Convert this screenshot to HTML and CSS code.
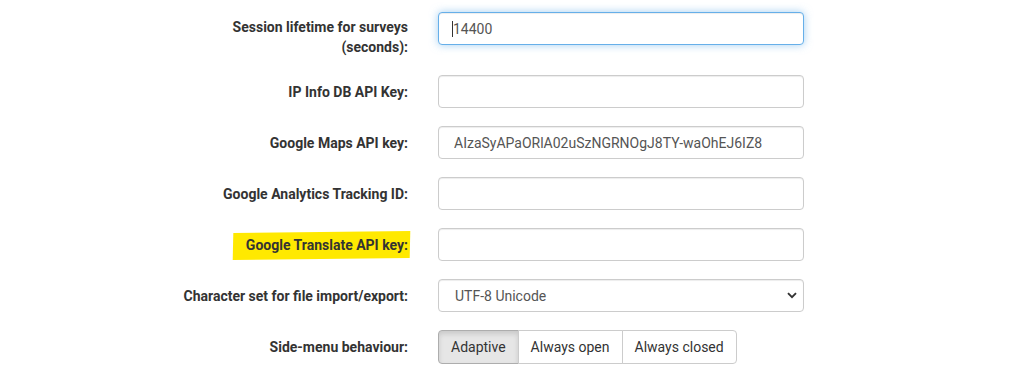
FILE: index.html
```html
<!DOCTYPE html>
<html lang="en">
<head>
    <meta charset="UTF-8">
    <meta name="viewport" content="width=device-width, initial-scale=1.0">
    <title>Global settings</title>
    <link rel="stylesheet" href="styles.css">
</head>
<body>
    <form class="settings-form">
        <div class="form-row">
            <label class="form-label" for="sessionLifetime">Session lifetime for surveys<br>(seconds):</label>
            <div class="form-field">
                <input type="text" id="sessionLifetime" class="form-input is-focused" value="14400">
                <span class="caret"></span>
            </div>
        </div>

        <div class="form-row">
            <label class="form-label" for="ipInfoKey">IP Info DB API Key:</label>
            <div class="form-field">
                <input type="text" id="ipInfoKey" class="form-input">
            </div>
        </div>

        <div class="form-row">
            <label class="form-label" for="mapsKey">Google Maps API key:</label>
            <div class="form-field">
                <input type="text" id="mapsKey" class="form-input" value="AIzaSyAPaORlA02uSzNGRNOgJ8TY-waOhEJ6IZ8">
            </div>
        </div>

        <div class="form-row">
            <label class="form-label" for="analyticsId">Google Analytics Tracking ID:</label>
            <div class="form-field">
                <input type="text" id="analyticsId" class="form-input">
            </div>
        </div>

        <div class="form-row">
            <label class="form-label" for="translateKey"><span class="marker">Google Translate API key:</span></label>
            <div class="form-field">
                <input type="text" id="translateKey" class="form-input">
            </div>
        </div>

        <div class="form-row">
            <label class="form-label" for="charset">Character set for file import/export:</label>
            <div class="form-field select-wrap">
                <select id="charset" class="form-input form-select">
                    <option>UTF-8 Unicode</option>
                    <option>ISO-8859-1 West European</option>
                </select>
                <svg class="select-arrow" width="10" height="7" viewBox="0 0 10 7">
                    <path d="M1 1.2 L5 5.2 L9 1.2" fill="none" stroke="#333" stroke-width="1.9"/>
                </svg>
            </div>
        </div>

        <div class="form-row">
            <label class="form-label">Side-menu behaviour:</label>
            <div class="form-field">
                <div class="btn-group">
                    <button type="button" class="btn active">Adaptive</button>
                    <button type="button" class="btn">Always open</button>
                    <button type="button" class="btn">Always closed</button>
                </div>
            </div>
        </div>
    </form>
</body>
</html>
```

FILE: styles.css
```css
* {
    box-sizing: border-box;
    margin: 0;
    padding: 0;
}

body {
    font-family: Roboto, "Helvetica Neue", Arial, sans-serif;
    font-size: 14px;
    line-height: 20px;
    color: #333;
    background: #fff;
}

.settings-form {
    padding-top: 12px;
    display: flex;
    flex-direction: column;
    gap: 18px;
}

.form-row {
    display: grid;
    grid-template-columns: 408px 366px;
    column-gap: 30px;
    align-items: center;
}

.form-row:first-child {
    align-items: start;
}

.form-row:first-child .form-label {
    padding-top: 5px;
}

.form-label {
    text-align: right;
    font-weight: 700;
    color: #333;
}

.form-field {
    position: relative;
}

.form-input {
    display: block;
    width: 100%;
    height: 33px;
    padding: 6px 15px;
    font-family: inherit;
    font-size: 14px;
    color: #555;
    background: #fff;
    border: 1px solid #ccc;
    border-radius: 4px;
    box-shadow: inset 0 1px 1px rgba(0, 0, 0, 0.075);
    outline: none;
}

.form-input.is-focused {
    border-color: #66afe9;
    box-shadow: inset 0 1px 1px rgba(0, 0, 0, 0.075), 0 0 8px rgba(102, 175, 233, 0.6);
    padding-left: 14px;
}

.caret {
    position: absolute;
    left: 14px;
    top: 9px;
    width: 1px;
    height: 16px;
    background: #333;
}

.form-select {
    appearance: none;
    -webkit-appearance: none;
    padding-left: 16px;
}

.select-arrow {
    position: absolute;
    right: 7px;
    top: 13px;
    pointer-events: none;
}

.marker {
    position: relative;
    display: inline-block;
    z-index: 0;
}

.marker:before {
    content: "";
    position: absolute;
    left: -13px;
    right: -2px;
    top: -3px;
    bottom: -4px;
    background: #ffe900;
    transform: rotate(-0.7deg) skewX(-2deg);
    z-index: -1;
}

.btn-group {
    display: flex;
}

.btn {
    height: 34px;
    padding: 6px 12px;
    font-family: inherit;
    font-size: 14px;
    color: #333;
    background: #fff;
    border: 1px solid #ccc;
    cursor: pointer;
}

.btn + .btn {
    margin-left: -1px;
}

.btn:first-child {
    border-radius: 4px 0 0 4px;
}

.btn:last-child {
    border-radius: 0 4px 4px 0;
}

.btn.active {
    background: #e6e6e6;
    border-color: #adadad;
    box-shadow: inset 0 3px 5px rgba(0, 0, 0, 0.125);
}
```
